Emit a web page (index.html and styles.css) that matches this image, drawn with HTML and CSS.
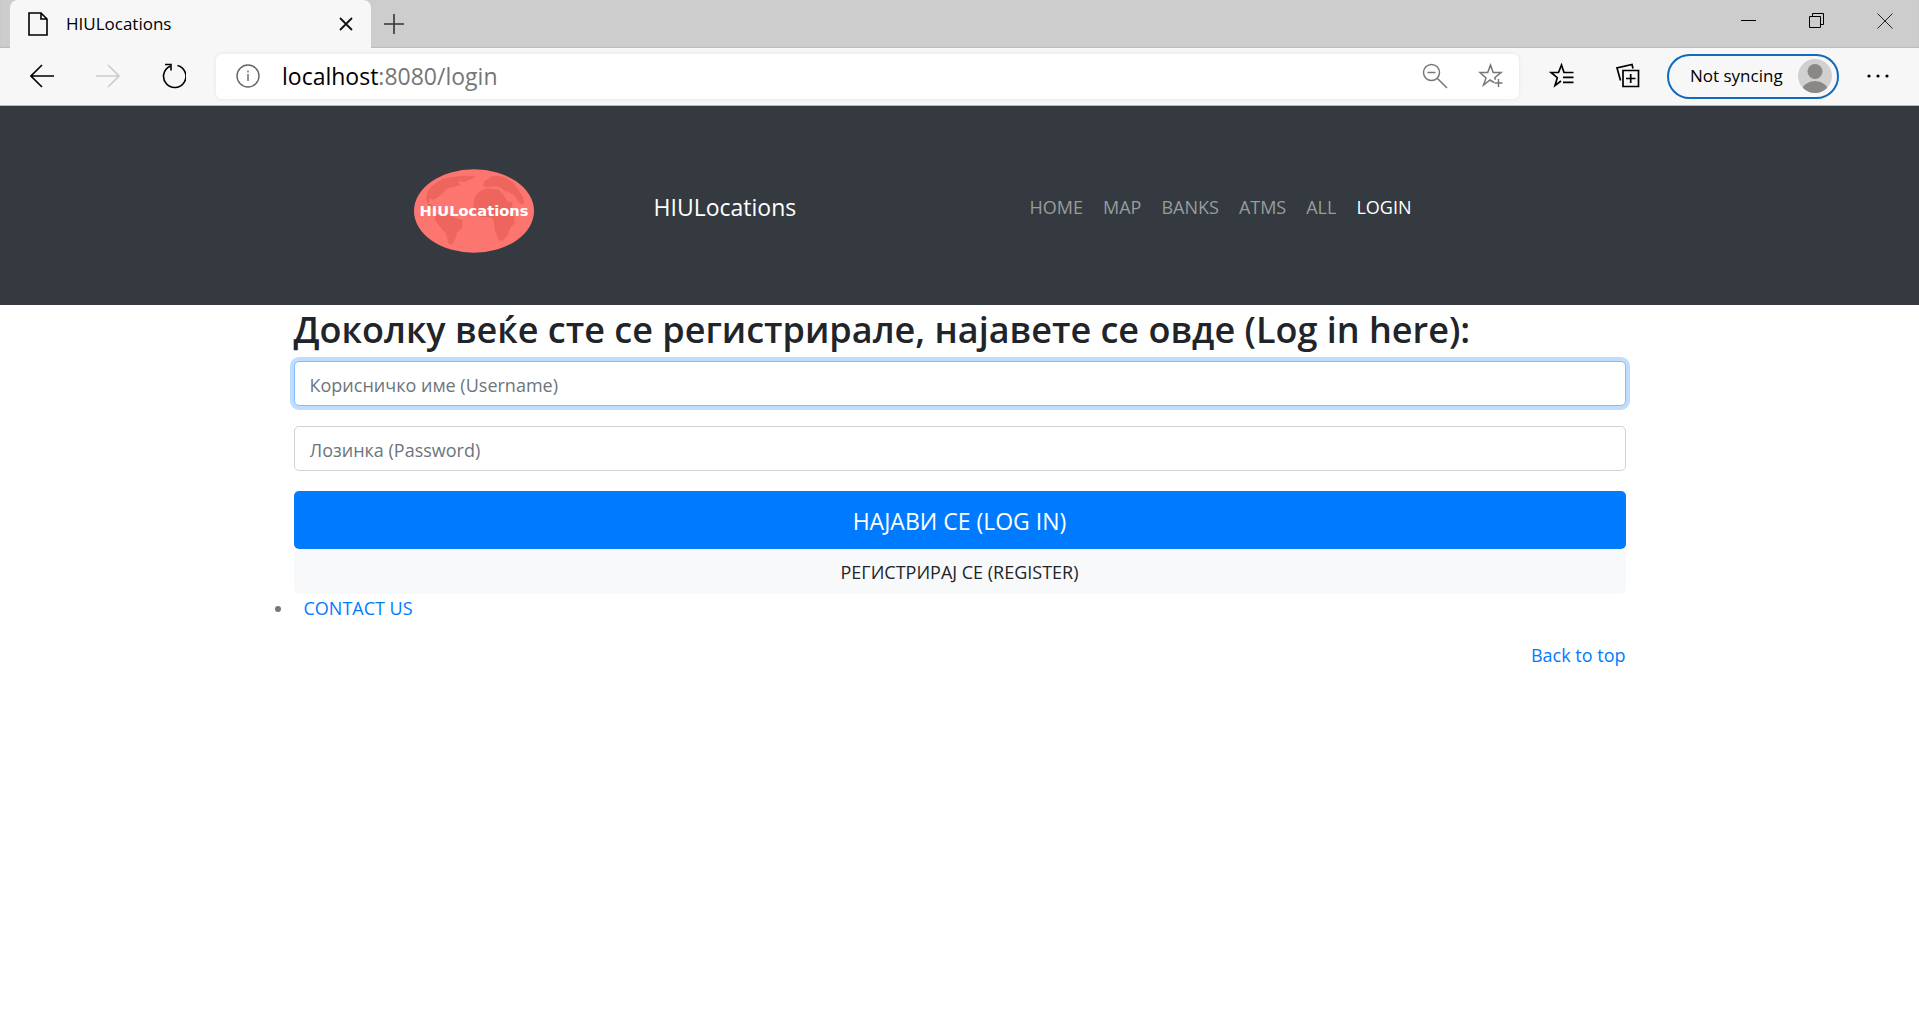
FILE: index.html
```html
<!DOCTYPE html>
<html lang="mk">
<head>
<meta charset="utf-8">
<title>HIULocations</title>
<link rel="stylesheet" href="styles.css">
</head>
<body>
<div class="browser">
  <div class="tabstrip">
    <div class="tab">
      <svg class="tab-icon" width="20" height="24" viewBox="0 0 20 24" fill="none" stroke="#000" stroke-width="1.6"><path d="M1 1h12l6 6v16H1zM13 1v6h6"/></svg>
      <span class="tab-title">HIULocations</span>
      <button class="plain" type="button" aria-label="Close tab"><svg width="14" height="14" viewBox="0 0 14 14" stroke="#111" stroke-width="1.8"><path d="M1 1l12 12M13 1L1 13"/></svg></button>
    </div>
    <button class="plain new-tab" type="button" aria-label="New tab"><svg width="20" height="20" viewBox="0 0 20 20" stroke="#333" stroke-width="1.6"><path d="M10 0v20M0 10h20"/></svg></button>
    <div class="window-controls">
      <button class="plain" type="button" aria-label="Minimize"><svg width="16" height="16" viewBox="0 0 16 16" stroke="#000"><path d="M0 7.500h15"/></svg></button>
      <button class="plain" type="button" aria-label="Restore"><svg width="16" height="16" viewBox="0 0 16 16" fill="none" stroke="#000"><path d="M.5 3.500h11v11H.5zM3.500 3.500v-3h11v11h-3"/></svg></button>
      <button class="plain" type="button" aria-label="Close"><svg width="16" height="16" viewBox="0 0 16 16" stroke="#222"><path d="M.5.5l15 15M15.500.5l-15 15"/></svg></button>
    </div>
  </div>
  <div class="toolbar">
    <div class="nav-buttons">
      <button class="plain" type="button" aria-label="Back"><svg width="24" height="24" viewBox="0 0 24 24" fill="none" stroke="#000" stroke-width="1.6"><path d="M12 1L1 12l11 11M1 12h23"/></svg></button>
      <button class="plain" type="button" aria-label="Forward"><svg width="24" height="24" viewBox="0 0 24 24" fill="none" stroke="#ccc" stroke-width="1.6"><path d="M12 1l11 11-11 11M23 12H0"/></svg></button>
      <button class="plain" type="button" aria-label="Refresh"><svg width="24" height="26" viewBox="0 0 24 26" fill="none" stroke="#000" stroke-width="1.6"><path d="M15.500 2.500A11.200 11.200 0 1 1 8 3.200M3 1.500h6v6"/></svg></button>
    </div>
    <div class="address">
      <svg width="24" height="24" viewBox="0 0 24 24" fill="none" stroke="#666" stroke-width="1.4"><circle cx="12" cy="12" r="11"/><path d="M12 10v7M12 6.500v2"/></svg>
      <span class="url">localhost<span class="url-rest">:8080/login</span></span>
      <button class="plain" type="button" aria-label="Zoom"><svg width="26" height="26" viewBox="0 0 26 26" fill="none" stroke="#777" stroke-width="1.5"><circle cx="9.500" cy="9.500" r="8"/><path d="M5.500 9.500h8M15 15l10 10"/></svg></button>
      <button class="plain" type="button" aria-label="Add to favorites"><svg width="26" height="26" viewBox="0 0 26 26" fill="none" stroke="#777" stroke-width="1.5"><path d="M16 19.500l-4-2.500-6.500 5L8 15 2 9.500h7.700L12.500 2l2.700 7.500H23l-6.200 5.300.6 2M20.500 16v8M16.500 20h8"/></svg></button>
    </div>
    <div class="tools">
      <button class="plain" type="button" aria-label="Favorites"><svg width="26" height="26" viewBox="0 0 26 26" fill="none" stroke="#000" stroke-width="1.7"><path d="M12 18L6 22.500l2.300-7.800L2 9.500h7.500L12.500 2 15 9.500h9.500M14 14.300h10.500M14 19.300h10.500"/></svg></button>
      <button class="plain" type="button" aria-label="Collections"><svg width="26" height="26" viewBox="0 0 26 26" fill="none" stroke="#000" stroke-width="1.7"><path d="M8 7.500h15.500v16H8zM15.700 11v9M11 15.500h9.500M5.500 17.500L2 5l15-3.500 1 4"/></svg></button>
    </div>
    <button class="profile" type="button">Not syncing
      <svg width="34" height="34" viewBox="0 0 34 34"><defs><clipPath id="face"><circle cx="17" cy="17" r="17"/></clipPath></defs><g clip-path="url(#face)"><path fill="#d2d0ce" d="M0 0h34v34H0z"/><circle cx="17" cy="12.500" r="7.500" fill="#8a8785"/><ellipse cx="17" cy="32" rx="13" ry="10" fill="#8a8785"/></g></svg>
    </button>
    <button class="plain more" type="button" aria-label="Settings and more"><svg width="22" height="4" viewBox="0 0 22 4"><circle cx="2" cy="2" r="1.600"/><circle cx="11" cy="2" r="1.600"/><circle cx="20" cy="2" r="1.600"/></svg></button>
  </div>
</div>

<header class="site-header">
  <div class="container header-row">
    <svg class="logo" width="120" height="84" viewBox="0 0 360 252" role="img" aria-label="HIULocations">
      <ellipse cx="180" cy="126" rx="180" ry="125" fill="#fc766f"/>
      <g fill="#ee655d">
        <path d="M36 90L40 68 58 48 84 30 112 24 140 26 150 32 132 38 140 48 118 54 96 60 88 72 72 84 60 92 48 88 44 104 66 112 76 122 60 120 44 112z"/>
        <path d="M114 24l36-4 38 2-16 8-22 10-20-6z"/>
        <path d="M60 136l44-2 20 12 22 8-2 22-14 14-6 20-10 18-10-4-8-30-20-22-12-18z"/>
        <path d="M178 108l4-24 16-18 22-8 34 4 14 14 12 22 16 2-4 20-12 16 20 4 2 22-14 16-6 20-16 18-12-2-10-26-4-28-6-14-34-2-20-14z"/>
        <path d="M206 52l6-16 22-14 20-2 22 6 20 14 18 22 14 24 2 20-14-4-14-22-16-10-14-4-12-10-16-4-18 2z"/>
      </g>
      <text class="logo-text" x="180" y="140" text-anchor="middle">HIULocations</text>
    </svg>
    <a class="brand" href="#">HIULocations</a>
    <nav class="menu">
      <a href="#">HOME</a><a href="#">MAP</a><a href="#">BANKS</a><a href="#">ATMS</a><a href="#">ALL</a><a class="active" href="#">LOGIN</a>
    </nav>
  </div>
</header>

<main class="container">
  <form class="login">
    <h2>Доколку веќе сте се регистрирале, најавете се овде (Log in here):</h2>
    <input class="field current" type="text" aria-label="Корисничко име (Username)" placeholder="Корисничко име (Username)">
    <input class="field" type="password" aria-label="Лозинка (Password)" placeholder="Лозинка (Password)">
    <button class="btn primary" type="submit">НАЈАВИ СЕ (LOG IN)</button>
    <a class="btn light" href="#">РЕГИСТРИРАЈ СЕ (REGISTER)</a>
  </form>
</main>

<footer class="container">
  <ul class="links"><li><a href="#">CONTACT US</a></li></ul>
  <p class="top-link"><a href="#">Back to top</a></p>
</footer>
</body>
</html>
```
FILE: styles.css
```css
* { box-sizing: border-box; }
body {
  margin: 0;
  background: #fff;
  color: #212529;
  font: 18px/28px "Open Sans", "Noto Sans", sans-serif;
}
a { color: #007bff; text-decoration: none; }
svg { display: block; flex: none; }
button { font: inherit; cursor: pointer; }
.plain { display: block; padding: 0; border: 0; background: none; }

/* Browser frame */
.browser { background: #f7f7f7; border-bottom: 1px solid #b8b8b8; color: #000; }
.tabstrip {
  display: flex;
  align-items: center;
  height: 48px;
  padding-left: 10px;
  background: #cdcdcd;
  box-shadow: inset 0 -1px 1px #bbb;
}
.tab {
  display: flex;
  align-items: center;
  gap: 18px;
  width: 361px;
  height: 48px;
  padding: 0 18px;
  border-radius: 8px 8px 0 0;
  background: #f7f7f7;
}
.tab-title { flex: 1; font-size: 17px; }
.new-tab { margin-left: 13px; }
.window-controls { display: flex; gap: 52px; margin: 0 26px 6px auto; }
.toolbar { display: flex; align-items: center; height: 57px; padding: 0 30px 1px; }
.nav-buttons { display: flex; align-items: center; gap: 42px; width: 186px; }
.address {
  display: flex;
  flex: 1;
  align-items: center;
  gap: 30px;
  height: 45px;
  padding: 0 15px 0 20px;
  border-radius: 6px;
  background: #fff;
  box-shadow: 0 0 4px #e4e4e4;
}
.url { flex: 1; margin-left: -8px; font-size: 23px; }
.url-rest { color: #767676; }
.tools { display: flex; gap: 40px; margin: 0 26px 0 30px; }
.profile {
  display: flex;
  align-items: center;
  justify-content: space-between;
  width: 172px;
  height: 45px;
  padding: 0 5px 0 21px;
  border: 2px solid #0f6cbd;
  border-radius: 23px;
  background: none;
  font-size: 17px;
}
.more { margin-left: 28px; }

/* Page */
.container { width: 100%; max-width: 1368px; margin: 0 auto; padding: 0 18px; }
.site-header { background: #343a40; }
.header-row { display: flex; align-items: center; min-height: 199px; padding: 2px 232px 0 138px; }
.logo { margin-top: 8px; }
.logo-text { fill: #fff; font: bold 44px "DejaVu Sans", sans-serif; }
.brand { margin-left: 120px; color: #fff; font-size: 23px; }
.menu { display: flex; gap: 20px; margin-left: auto; }
.menu a { color: #999c9f; }
.menu .active { color: #fff; }

.login { display: flex; flex-direction: column; }
h2 { margin: 0 0 8px; padding-top: 2px; font-size: 36px; font-weight: 600; line-height: 46px; }
.field {
  width: 100%;
  height: 45px;
  margin-bottom: 20px;
  padding: 2px 15px 0;
  border: 1px solid #ced4da;
  border-radius: 5px;
  background: #fff;
  color: #495057;
  font: inherit;
}
.field::placeholder { color: #6c757d; opacity: 1; }
.current { border-color: #80bdff; box-shadow: 0 0 0 4px #bfdeff; }
.btn { display: block; border: 0; border-radius: 5px; text-align: center; }
.primary { height: 58px; padding-top: 3px; background: #007bff; color: #fff; font-size: 23px; }
.light { height: 45px; line-height: 46px; background: #f8f9fa; color: #212529; }
.links { margin: 0 0 19px; padding: 0; color: #777; }
.links a { margin-left: 10px; }
.top-link { margin: 0; text-align: right; }
```
